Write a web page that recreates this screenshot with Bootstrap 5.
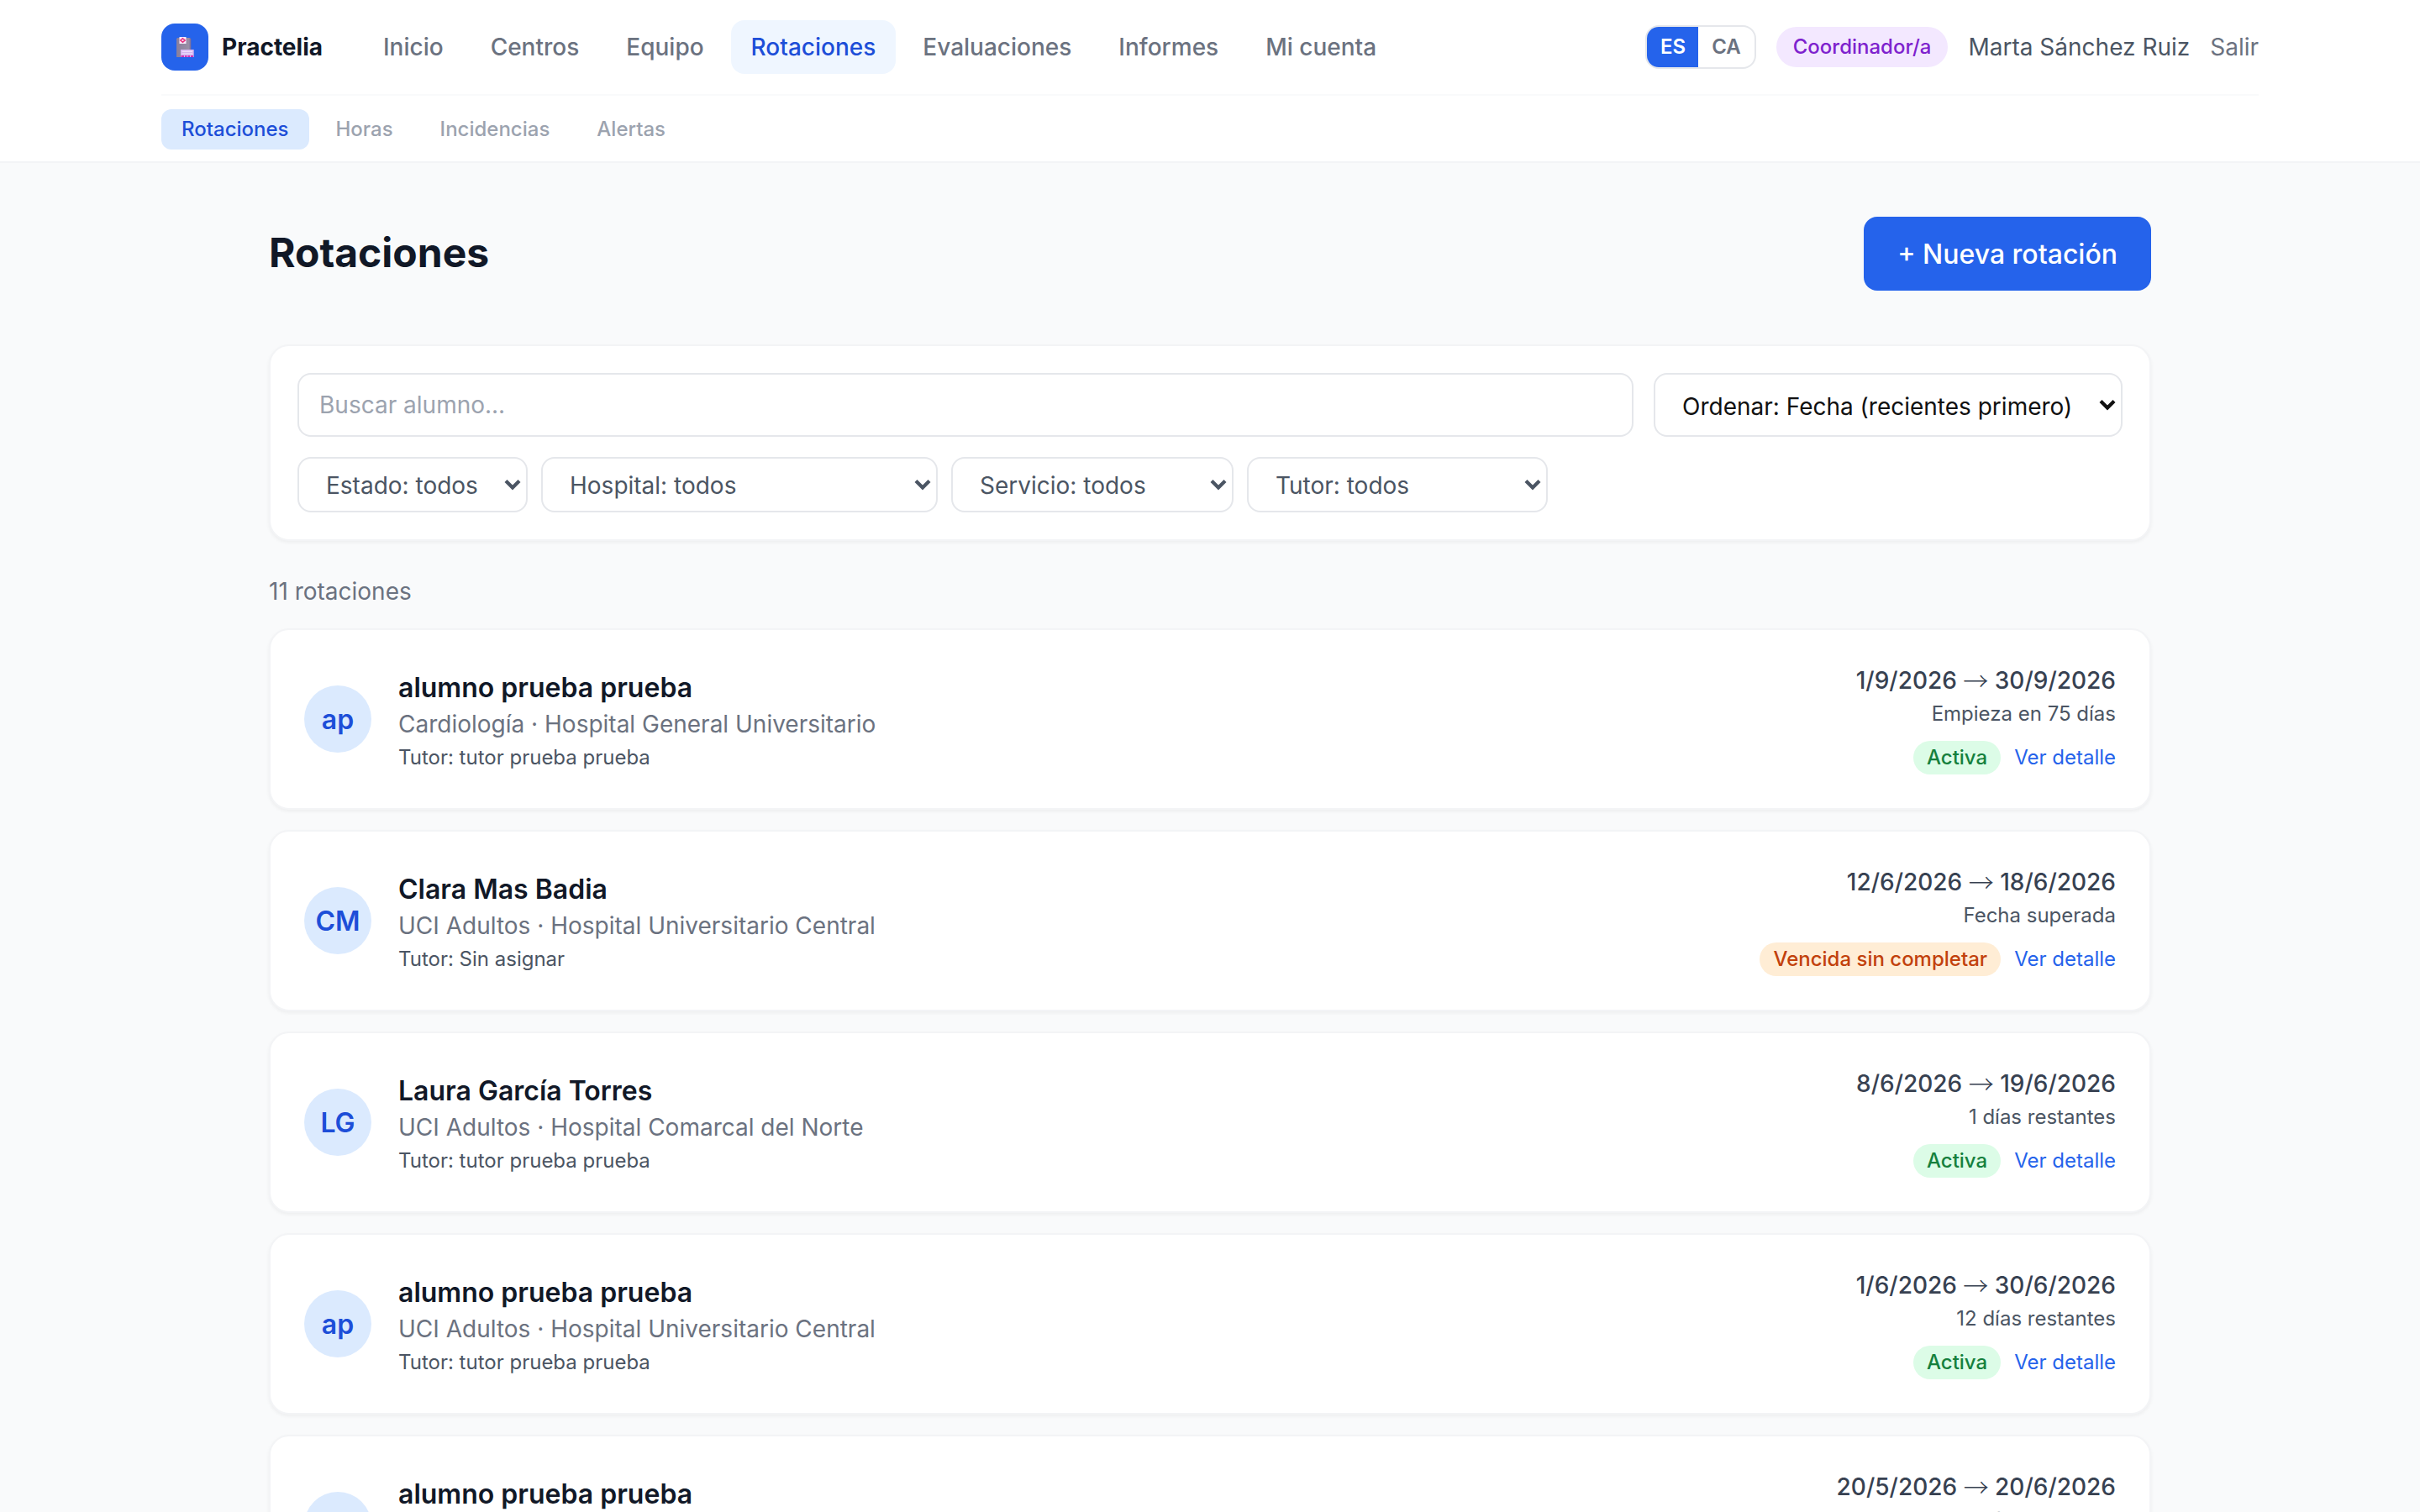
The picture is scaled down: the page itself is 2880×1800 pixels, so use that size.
<!DOCTYPE html>
<html lang="es">
<head>
    <meta charset="UTF-8">
    <meta name="viewport" content="width=device-width, initial-scale=1.0">
    <title>Rotaciones - Practelia</title>
    <link rel="stylesheet" href="https://cdn.jsdelivr.net/npm/bootstrap@5.3.0/dist/css/bootstrap.min.css">
    <style>
        /* 1rem = 32px, todo lo demás escala desde aquí */
        html { font-size: 32px; }
        body {
            font-family: Inter, "Liberation Sans", sans-serif;
            font-optical-sizing: none;
            background: #f9fafb;
            color: #111827;
            height: 100vh;
            overflow: hidden;
        }
        a { text-decoration: none; }
        .txt-sm { font-size: .875rem; line-height: 1.25rem; }
        .txt-xs { font-size: .75rem; line-height: 1rem; }
        .c-900 { color: #111827; }
        .c-700 { color: #374151; }
        .c-600 { color: #4b5563; }
        .c-500 { color: #6b7280; }

        /* Cabecera */
        .top-header { background: #fff; border-bottom: 2px solid #f3f4f6; }
        .header-inner { width: 2496px; margin: 0 auto; }
        .main-bar { height: 112px; }
        .main-tools { gap: 24px; }
        .logo-box { width: 56px; height: 56px; border-radius: 16px; background: #2563eb; }
        .main-bar .nav { gap: 8px; margin-left: 48px; }
        .main-bar .nav-link { padding: 12px 24px; border-radius: 16px; color: #6b7280; font-weight: 500; }
        .main-bar .nav-link.active { background: #eff6ff; color: #1d4ed8; }
        .sub-bar { border-top: 2px solid #f9fafb; padding: 16px 0 14px; }
        .sub-bar .nav { gap: 8px; }
        .sub-bar .nav-link { padding: 8px 24px; border-radius: 12px; color: #9ca3af; font-weight: 500; }
        .sub-bar .nav-link.active { background: #dbeafe; color: #1d4ed8; }
        .lang-switch { border: 2px solid #e5e7eb; border-radius: 16px; overflow: hidden; }
        .lang-switch a { padding: 8px 16px; color: #6b7280; font-weight: 600; }
        .lang-switch a.active { background: #2563eb; color: #fff; padding-right: 15px; }
        .role-pill { background: #f3e8ff; color: #7e22ce; padding: 8px 20px; font-weight: 500; }

        /* Contenido */
        .page-main { width: 2240px; margin: 0 auto; padding-top: 64px; }
        .page-title { font-size: 48px; line-height: 64px; font-weight: 700; padding-bottom: 2px; }
        .btn-new { background: #2563eb; border: 0; border-radius: 16px; padding: 21px 40px 19px; line-height: 48px; font-weight: 500; color: #fff; }
        .panel { background: #fff; border: 2px solid #f3f4f6; border-radius: 24px; box-shadow: 0 2px 4px rgba(0, 0, 0, .05); }
        .filters { margin-top: 64px; padding: 32px; }
        .filter-row { gap: 24px; margin-bottom: 24px; }
        .filters .form-control,
        .filters .form-select { border: 2px solid #e5e7eb; border-radius: 16px; font-size: 28px; line-height: 40px; }
        .filters .form-control { padding: 16px 24px; height: 76px; }
        .filters .form-control::placeholder { color: #9ca3af; }
        .filters .form-select {
            width: auto;
            height: 66px;
            padding: 13px 48px 11px 32px;
            line-height: 38px;
            color: #4b5563;
            background-image: url("data:image/svg+xml,%3csvg xmlns='http://www.w3.org/2000/svg' viewBox='0 0 20 14'%3e%3cpath fill='none' stroke='%234b5563' stroke-width='4.2' d='M2 2.5l8 8 8-8'/%3e%3c/svg%3e");
            background-size: 20px 14px;
            background-position: right 6px center;
        }
        .filters .sort-select {
            width: 558px;
            height: 76px;
            padding: 19px 48px 15px 32px;
            color: #111;
            background-image: url("data:image/svg+xml,%3csvg xmlns='http://www.w3.org/2000/svg' viewBox='0 0 20 14'%3e%3cpath fill='none' stroke='%23111' stroke-width='4.2' d='M2 2.5l8 8 8-8'/%3e%3c/svg%3e");
        }
        .filters .sel-estado { width: 274px; }
        .filters .sel-hospital { width: 472px; }
        .filters .sel-servicio { width: 336px; }
        .filters .sel-tutor { width: 358px; }
        .count { margin: 40px 0 24px; }

        /* Tarjetas de rotación */
        .rotation-list { gap: 24px; }
        .rotation { height: 216px; flex-shrink: 0; padding: 0 40px; }
        .avatar { width: 80px; height: 80px; padding-top: 2px; background: #dbeafe; color: #1d4ed8; font-weight: 600; }
        .student { padding-top: 2px; line-height: 46px; font-weight: 600; }
        .note { margin-top: 4px; }
        .dates { height: 40px; font-weight: 500; }
        .arrow { font-family: "Noto Sans CJK JP", sans-serif; font-size: 30px; font-weight: 300; line-height: 0; vertical-align: -2px; }
        .status { padding: 4px 16px; font-weight: 500; }
        .status-ok { background: #dcfce7; color: #15803d; }
        .status-late { background: #ffedd5; color: #c2410c; }
        .detail-link { color: #2563eb; }
    </style>
</head>
<body>
    <!-- Cabecera -->
    <header class="top-header">
        <div class="header-inner">
            <div class="main-bar d-flex align-items-center">
                <a href="#" class="d-flex align-items-center gap-2 c-900">
                    <span class="logo-box d-flex align-items-center justify-content-center">
                        <svg width="21" height="24" viewBox="0 0 21 24">
                            <defs>
                                <linearGradient id="tower" x1="0" y1="0" x2="1" y2="0">
                                    <stop offset="0" stop-color="#8a7f9c"/>
                                    <stop offset=".85" stop-color="#998fa6"/>
                                    <stop offset="1" stop-color="#75699a"/>
                                </linearGradient>
                            </defs>
                            <path fill="url(#tower)" d="M0 24V2l1.500-1H16l1.300 1.500V24z"/>
                            <path fill="#fbe9fb" d="M3.500 0h8v8h-8z"/>
                            <path fill="none" stroke="#e8317f" stroke-width="1.500" d="M7.500 1.800L10.200 4 7.500 6.200 4.800 4z"/>
                            <path fill="#d5b5f0" d="M5 15h15.700v9H5z"/>
                            <path fill="#eedcfb" d="M6.500 16.500h12.500v1.500H6.500zM6.500 19.200h12.500v1.200H6.500z"/>
                            <path fill="#cf30b4" d="M5.500 22h3.500v2H5.500zM10 22h2.500v2H10zM13.500 22h2.500v2h-2.500zM17 22h3v2h-3z"/>
                        </svg>
                    </span>
                    <span class="txt-sm fw-bold">Practelia</span>
                </a>
                <nav class="nav txt-sm">
                    <a class="nav-link" href="#">Inicio</a>
                    <a class="nav-link" href="#">Centros</a>
                    <a class="nav-link" href="#">Equipo</a>
                    <a class="nav-link active" href="#">Rotaciones</a>
                    <a class="nav-link" href="#">Evaluaciones</a>
                    <a class="nav-link" href="#">Informes</a>
                    <a class="nav-link" href="#">Mi cuenta</a>
                </nav>
                <div class="main-tools d-flex align-items-center ms-auto">
                    <div class="lang-switch d-flex txt-xs">
                        <a href="#" class="active">ES</a>
                        <a href="#">CA</a>
                    </div>
                    <span class="role-pill rounded-pill txt-xs">Coordinador/a</span>
                    <span class="txt-sm c-600">Marta Sánchez Ruiz</span>
                    <a href="#" class="txt-sm c-500">Salir</a>
                </div>
            </div>
            <div class="sub-bar">
                <nav class="nav txt-xs">
                    <a class="nav-link active" href="#">Rotaciones</a>
                    <a class="nav-link" href="#">Horas</a>
                    <a class="nav-link" href="#">Incidencias</a>
                    <a class="nav-link" href="#">Alertas</a>
                </nav>
            </div>
        </div>
    </header>

    <main class="page-main">
        <div class="d-flex align-items-center justify-content-between">
            <h1 class="page-title mb-0">Rotaciones</h1>
            <button class="btn btn-new" type="button">+ Nueva rotación</button>
        </div>

        <!-- Filtros -->
        <div class="panel filters">
            <div class="filter-row d-flex">
                <input type="text" class="form-control flex-fill" placeholder="Buscar alumno...">
                <select class="form-select sort-select flex-shrink-0">
                    <option>Ordenar: Fecha (recientes primero)</option>
                </select>
            </div>
            <div class="d-flex gap-2">
                <select class="form-select sel-estado"><option>Estado: todos</option></select>
                <select class="form-select sel-hospital"><option>Hospital: todos</option></select>
                <select class="form-select sel-servicio"><option>Servicio: todos</option></select>
                <select class="form-select sel-tutor"><option>Tutor: todos</option></select>
            </div>
        </div>

        <p class="count txt-sm c-500">11 rotaciones</p>

        <div id="rotationList" class="rotation-list d-flex flex-column">
            <!-- Las rotaciones se añaden aquí -->
        </div>
    </main>

    <script src="https://cdn.jsdelivr.net/npm/bootstrap@5.3.0/dist/js/bootstrap.bundle.min.js"></script>
    <script>
        const rotations = [
            { initials: 'ap', name: 'alumno prueba prueba', place: 'Cardiología · Hospital General Universitario', tutor: 'tutor prueba prueba', from: '1/9/2026', to: '30/9/2026', note: 'Empieza en 75 días', status: 'Activa' },
            { initials: 'CM', name: 'Clara Mas Badia', place: 'UCI Adultos · Hospital Universitario Central', tutor: 'Sin asignar', from: '12/6/2026', to: '18/6/2026', note: 'Fecha superada', status: 'Vencida sin completar' },
            { initials: 'LG', name: 'Laura García Torres', place: 'UCI Adultos · Hospital Comarcal del Norte', tutor: 'tutor prueba prueba', from: '8/6/2026', to: '19/6/2026', note: '1 días restantes', status: 'Activa' },
            { initials: 'ap', name: 'alumno prueba prueba', place: 'UCI Adultos · Hospital Universitario Central', tutor: 'tutor prueba prueba', from: '1/6/2026', to: '30/6/2026', note: '12 días restantes', status: 'Activa' },
            { initials: 'ap', name: 'alumno prueba prueba', place: 'UCI Adultos · Hospital Universitario Central', tutor: 'tutor prueba prueba', from: '20/5/2026', to: '20/6/2026', note: '2 días restantes', status: 'Activa' }
        ];

        // Pinta la lista de rotaciones
        function renderRotations() {
            const list = document.getElementById('rotationList');
            list.innerHTML = rotations.map(r => `
                <div class="panel rotation d-flex align-items-center justify-content-between">
                    <div class="d-flex align-items-center gap-3">
                        <div class="avatar rounded-circle d-flex align-items-center justify-content-center">${r.initials}</div>
                        <div>
                            <div class="student">${r.name}</div>
                            <div class="txt-sm c-500">${r.place}</div>
                            <div class="note txt-xs c-600">Tutor: ${r.tutor}</div>
                        </div>
                    </div>
                    <div class="text-end">
                        <div class="dates txt-sm c-700">${r.from} <span class="arrow">→</span> ${r.to}</div>
                        <div class="note txt-xs c-600">${r.note}</div>
                        <div class="d-flex align-items-center justify-content-end gap-2 mt-2 txt-xs">
                            <span class="status rounded-pill ${r.status === 'Activa' ? 'status-ok' : 'status-late'}">${r.status}</span>
                            <a href="#" class="detail-link">Ver detalle</a>
                        </div>
                    </div>
                </div>
            `).join('');
        }

        renderRotations();
    </script>
</body>
</html>
